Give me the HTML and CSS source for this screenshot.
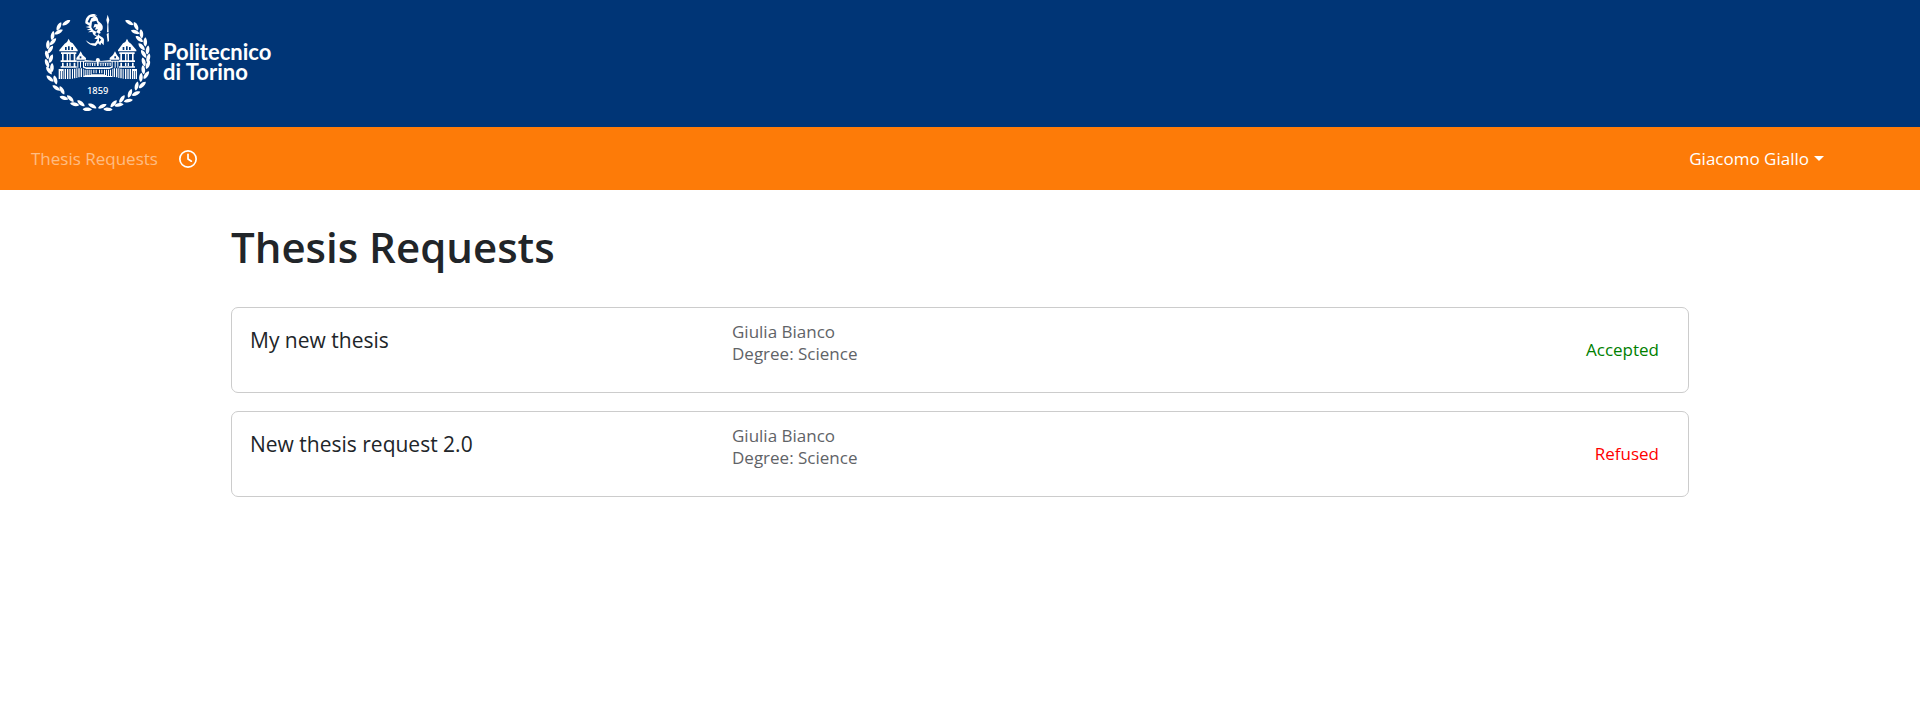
FILE: index.html
```html
<!DOCTYPE html>
<html lang="en">
<head>
<meta charset="utf-8">
<meta name="viewport" content="width=device-width, initial-scale=1">
<title>Thesis Requests</title>
<link rel="stylesheet" href="styles.css">
</head>
<body>
<header class="banner">
  <a class="brand" href="#" aria-label="Politecnico di Torino">
    <svg class="emblem" viewBox="42 36 324 306" fill="#fff" aria-hidden="true">
      <defs>
        <path id="leaf" d="M-14 0C-9-7 7-8 14 0C7 7-9 7-14 0Z"/>
        <g id="tower">
          <path d="M116 116L121 126L128 130L143 150V154H88V150L104 131L111 126Z"/>
          <path d="M93 157H139V162H93ZM96 162H101V181H96ZM110 162H114V181H110ZM118 162H122V181H118ZM131 162H136V181H131ZM92 181H140V186H92ZM96 188H101V203H96ZM110 188H114V198H110ZM118 188H122V198H118ZM131 188H136V203H131ZM92 199H140V203H92Z"/>
          <path fill="#003576" d="M105 141H110V150H105ZM114 139H119V150H114ZM124 141H129V150H124Z"/>
          <path d="M152 154L158 165L168 174V179H139V174L146 165Z"/>
          <path fill="#003576" d="M149 169H154V175H149Z"/>
          <path d="M140 182H165V185H140ZM142 185H145V203H142ZM150 185H153V203H150ZM159 185H162V203H159Z"/>
          <path d="M86 207H101V237H86ZM104 207H108V237H104ZM111 207H115V237H111ZM118 207H122V237H118ZM126 207H129V236H126ZM132 206H136V235H132ZM139 205H142V234H139ZM145 205H149V232H145ZM152 205H156V231H152ZM159 206H161V230H159Z"/>
          <path fill="#003576" d="M90 213H92V237H90ZM96 213H98V237H96Z"/>
        </g>
      </defs>
      <g>
        <use href="#leaf" transform="translate(109 68) rotate(-32)"/>
        <use href="#leaf" transform="translate(87 79) rotate(-62)"/>
        <use href="#leaf" transform="translate(86 96) rotate(-28)"/>
        <use href="#leaf" transform="translate(68 107) rotate(-80)"/>
        <use href="#leaf" transform="translate(69 125) rotate(-48)"/>
        <use href="#leaf" transform="translate(54 134) rotate(-88)"/>
        <use href="#leaf" transform="translate(61 149) rotate(-55)"/>
        <use href="#leaf" transform="translate(51 165) rotate(75)"/>
        <use href="#leaf" transform="translate(63 176) rotate(-70)"/>
        <use href="#leaf" transform="translate(51 190) rotate(70)"/>
        <use href="#leaf" transform="translate(66 203) rotate(-88)"/>
        <use href="#leaf" transform="translate(57 212) rotate(55)"/>
        <use href="#leaf" transform="translate(60 236) rotate(42)"/>
        <use href="#leaf" transform="translate(76 240) rotate(75)"/>
        <use href="#leaf" transform="translate(79 264) rotate(35)"/>
        <use href="#leaf" transform="translate(96 271) rotate(62)"/>
        <use href="#leaf" transform="translate(102 294) rotate(20)"/>
        <use href="#leaf" transform="translate(121 296) rotate(45)"/>
        <use href="#leaf" transform="translate(134 313) rotate(12)"/>
        <use href="#leaf" transform="translate(153 310) rotate(38)"/>
        <use href="#leaf" transform="translate(172 328) rotate(2)"/>
        <use href="#leaf" transform="translate(187 318) rotate(28)"/>
        <use href="#leaf" transform="translate(217 319) rotate(-25)"/>
        <use href="#leaf" transform="translate(234 328) rotate(5)"/>
        <use href="#leaf" transform="translate(251 311) rotate(-48)"/>
        <use href="#leaf" transform="translate(267 315) rotate(-8)"/>
        <use href="#leaf" transform="translate(276 297) rotate(-55)"/>
        <use href="#leaf" transform="translate(295 302) rotate(-10)"/>
        <use href="#leaf" transform="translate(300 280) rotate(-68)"/>
        <use href="#leaf" transform="translate(318 281) rotate(-24)"/>
        <use href="#leaf" transform="translate(320 258) rotate(-76)"/>
        <use href="#leaf" transform="translate(337 255) rotate(-42)"/>
        <use href="#leaf" transform="translate(333 232) rotate(-86)"/>
        <use href="#leaf" transform="translate(349 225) rotate(-55)"/>
        <use href="#leaf" transform="translate(340 209) rotate(-95)"/>
        <use href="#leaf" transform="translate(354 194) rotate(-68)"/>
        <use href="#leaf" transform="translate(341 186) rotate(75)"/>
        <use href="#leaf" transform="translate(355 174) rotate(-75)"/>
        <use href="#leaf" transform="translate(341 162) rotate(58)"/>
        <use href="#leaf" transform="translate(353 150) rotate(-82)"/>
        <use href="#leaf" transform="translate(335 140) rotate(48)"/>
        <use href="#leaf" transform="translate(346 126) rotate(-90)"/>
        <use href="#leaf" transform="translate(328 117) rotate(38)"/>
        <use href="#leaf" transform="translate(334 102) rotate(84)"/>
        <use href="#leaf" transform="translate(316 96) rotate(22)"/>
        <use href="#leaf" transform="translate(318 79) rotate(65)"/>
        <use href="#leaf" transform="translate(298 68) rotate(30)"/>
      </g>
      <use href="#tower"/>
      <use href="#tower" transform="translate(407 0) scale(-1 1)"/>
      <path d="M164 180L196 183L204 176L212 183L243 180V185H164ZM164 188H243V190H164ZM165 190H168V198H165ZM172 190H175V198H172ZM179 190H182V198H179ZM186 190H189V198H186ZM193 190H196V198H193ZM201 186H206V198H201ZM211 190H214V198H211ZM218 190H221V198H218ZM225 190H228V198H225ZM232 190H235V198H232ZM239 190H242V198H239ZM160 199L168 202H239L247 199V203L238 207H169L160 203Z"/>
      <path d="M164 209H167V229H164ZM170 209H173V228H170ZM176 209H179V228H176ZM182 209H185V228H182ZM190 209H193V220H190ZM197 209H200V220H197ZM207 209H210V220H207ZM214 209H217V220H214ZM222 209H225V228H222ZM228 209H231V228H228ZM234 209H237V228H234ZM240 209H243V229H240ZM160 228L188 223H219L247 228V231H160Z"/>
      <circle cx="203.500" cy="180" r="6"/>
      <path d="M166 70C165 57 171 48 180 44C188 41 196 42 202 47L194 46C201 50 205 57 205 63L214 71C219 76 220 84 216 91L210 94L212 99L205 103C210 111 219 110 222 119L221 136L214 128L211 136L204 130L197 138C185 138 174 132 167 121L181 130L195 130L203 118L193 116L200 109C193 108 188 103 187 96L174 97L184 91L170 90L181 85L167 81L179 78L166 70Z"/>
      <path fill="#003576" d="M173 65L180 52L192 50L184 55L178 69ZM186 65L199 62L204 73L194 72L190 83L198 80L195 89L204 88L199 95L190 91L184 82ZM198 97L206 100L202 108L196 104ZM207 113L214 119L207 126Z"/>
      <path d="M233 44L238 60L235 73L236 97H231L232 73L229 60ZM230 102L236 98L237 123L233 126Z"/>
      <text class="emblem-year" x="203" y="281" text-anchor="middle">1859</text>
    </svg>
    <span class="wordmark">Politecnico<br>di Torino</span>
  </a>
</header>
<nav class="navbar" aria-label="Main">
  <div class="nav-links">
    <a class="nav-link" href="#">Thesis Requests</a>
    <button class="clock" type="button" aria-label="Virtual clock">
      <svg class="clock-icon" viewBox="0 0 512 512" fill="currentColor" aria-hidden="true"><path d="M464 256A208 208 0 1 1 48 256a208 208 0 1 1 416 0zM0 256a256 256 0 1 0 512 0A256 256 0 1 0 0 256zM232 120V256c0 8 4 15.500 10.700 20l96 64c11 7.400 25.900 4.400 33.300-6.700s4.400-25.900-6.700-33.300L280 243.200V120c0-13.300-10.700-24-24-24s-24 10.700-24 24z"/></svg>
    </button>
  </div>
  <button class="user-menu" type="button" aria-haspopup="true">Giacomo Giallo<span class="caret"></span></button>
</nav>
<main class="content">
  <h1 class="page-title">Thesis Requests</h1>
  <ul class="requests">
    <li class="card">
      <h2 class="card-title">My new thesis</h2>
      <p class="card-meta">Giulia Bianco<br>Degree: Science</p>
      <span class="status status-accepted">Accepted</span>
    </li>
    <li class="card">
      <h2 class="card-title">New thesis request 2.0</h2>
      <p class="card-meta">Giulia Bianco<br>Degree: Science</p>
      <span class="status status-refused">Refused</span>
    </li>
  </ul>
</main>
</body>
</html>
```

FILE: styles.css
```css
* {
  box-sizing: border-box;
}

body {
  margin: 0;
  background: #fff;
  color: #212529;
  font-family: "Open Sans", "Noto Sans", sans-serif;
  font-size: 17px;
  line-height: 22px;
}

button {
  padding: 0;
  border: 0;
  background: none;
  color: inherit;
  font: inherit;
  cursor: pointer;
}

.banner {
  display: flex;
  padding: 12px 44px 13px;
  background: #003576;
}

.brand {
  display: flex;
  align-items: center;
  gap: 11px;
  color: #fff;
  text-decoration: none;
}

.emblem {
  width: 108px;
  height: 102px;
}

.emblem-year {
  font-family: "Noto Sans", sans-serif;
  font-size: 28px;
  font-weight: 500;
}

.wordmark {
  padding-bottom: 2px;
  font-family: Lato, "Open Sans", sans-serif;
  font-size: 22px;
  font-weight: 700;
  line-height: 20px;
}

.navbar {
  display: flex;
  align-items: center;
  justify-content: space-between;
  min-height: 63px;
  padding: 0 96px 0 31px;
  background: #fd7b08;
  color: #fff;
}

.nav-links {
  display: flex;
  align-items: center;
  gap: 21px;
}

.nav-link {
  color: rgba(255, 255, 255, 0.5);
  text-decoration: none;
}

.clock-icon {
  display: block;
  width: 18px;
  height: 18px;
}

.user-menu {
  display: flex;
  align-items: center;
  gap: 5px;
}

.caret {
  border-top: 5px solid;
  border-right: 5px solid transparent;
  border-left: 5px solid transparent;
}

.content {
  max-width: 1458px;
  margin: 0 auto;
  padding-top: 30px;
}

.page-title {
  margin: 0;
  font-size: 42px;
  font-weight: 600;
  line-height: 54px;
}

.requests {
  display: grid;
  gap: 18px;
  margin: 33px 0 0;
  padding: 0;
  list-style: none;
}

.card {
  display: grid;
  grid-template-columns: repeat(3, 1fr);
  gap: 8px;
  min-height: 86px;
  padding-left: 18px;
  border: 1px solid #ccc;
  border-radius: 7px;
}

.card-title {
  margin: 18px 0;
  font-size: 21px;
  font-weight: 400;
  line-height: 28px;
}

.card-meta {
  margin: 13px 0;
  color: #5f6367;
}

.status {
  align-self: center;
  justify-self: end;
  padding-right: 29px;
}

.status-accepted {
  color: #008000;
}

.status-refused {
  color: #f00;
}
```
